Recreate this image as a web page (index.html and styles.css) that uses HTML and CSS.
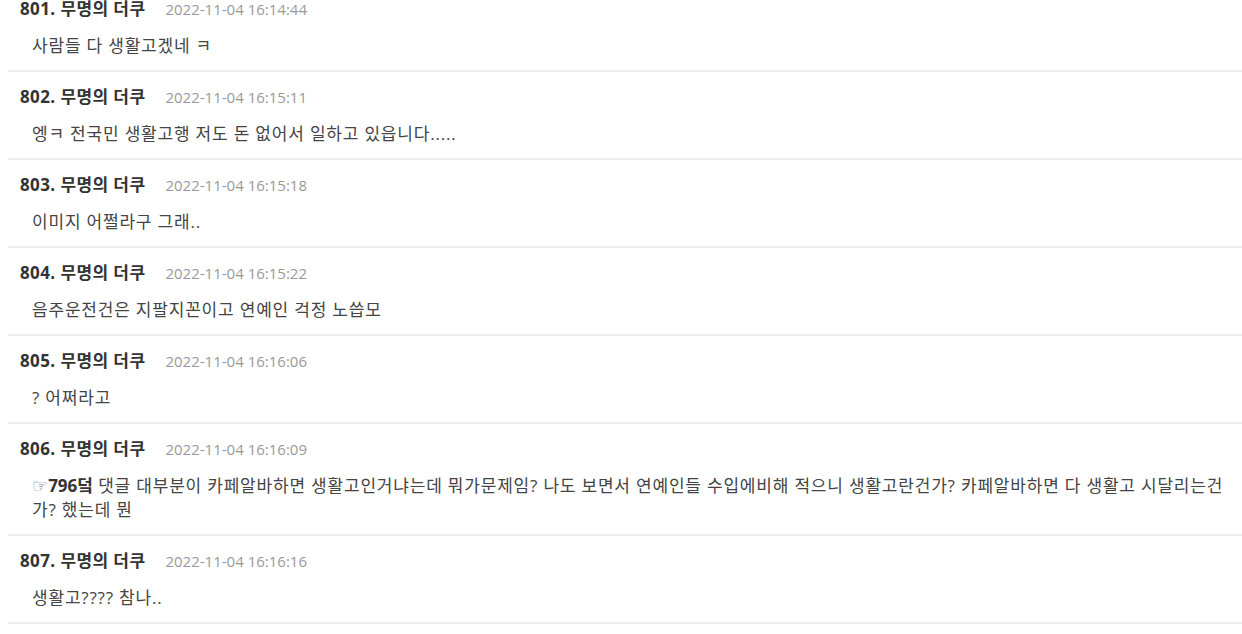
FILE: index.html
```html
<!DOCTYPE html>
<html lang="ko">
<head>
  <meta charset="UTF-8" />
  <meta name="viewport" content="width=device-width, initial-scale=1" />
  <title>댓글</title>
  <link rel="stylesheet" href="styles.css">
</head>
<body>
  <ul class="comments">
    <li class="comment">
      <div class="comment-head"><span class="num">801.</span> <span class="nick">무명의 더쿠</span><span class="date">2022-11-04 16:14:44</span></div>
      <div class="comment-body">사람들 다 생활고겠네 ㅋ</div>
    </li>
    <li class="comment">
      <div class="comment-head"><span class="num">802.</span> <span class="nick">무명의 더쿠</span><span class="date">2022-11-04 16:15:11</span></div>
      <div class="comment-body">엥ㅋ 전국민 생활고행 저도 돈 없어서 일하고 있읍니다.....</div>
    </li>
    <li class="comment">
      <div class="comment-head"><span class="num">803.</span> <span class="nick">무명의 더쿠</span><span class="date">2022-11-04 16:15:18</span></div>
      <div class="comment-body">이미지 어쩔라구 그래..</div>
    </li>
    <li class="comment">
      <div class="comment-head"><span class="num">804.</span> <span class="nick">무명의 더쿠</span><span class="date">2022-11-04 16:15:22</span></div>
      <div class="comment-body">음주운전건은 지팔지꼰이고 연예인 걱정 노씁모</div>
    </li>
    <li class="comment">
      <div class="comment-head"><span class="num">805.</span> <span class="nick">무명의 더쿠</span><span class="date">2022-11-04 16:16:06</span></div>
      <div class="comment-body">? 어쩌라고</div>
    </li>
    <li class="comment">
      <div class="comment-head"><span class="num">806.</span> <span class="nick">무명의 더쿠</span><span class="date">2022-11-04 16:16:09</span></div>
      <div class="comment-body"><a class="reply" href="#"><span class="hand">☞</span>796덬</a> 댓글 대부분이 카페알바하면 생활고인거냐는데 뭐가문제임? 나도 보면서 연예인들 수입에비해 적으니 생활고란건가? 카페알바하면 다 생활고 시달리는건가? 했는데 뭔</div>
    </li>
    <li class="comment">
      <div class="comment-head"><span class="num">807.</span> <span class="nick">무명의 더쿠</span><span class="date">2022-11-04 16:16:16</span></div>
      <div class="comment-body">생활고???? 참나..</div>
    </li>
  </ul>
</body>
</html>
```

FILE: styles.css
```css
html, body {
  margin: 0;
  padding: 0;
  background: #fff;
  overflow: hidden;
}
body {
  padding-left: 8px;
  font-family: 'Open Sans', 'Noto Sans CJK KR', sans-serif;
  color: #333;
}
.comments {
  list-style: none;
  margin: -16px 0 0 0;
  padding: 0;
}
.comment {
  padding: 13px 0 12px 12px;
  border-bottom: 2px solid #eee;
}
.comment-head {
  line-height: 24px;
  font-size: 17px;
  font-weight: bold;
  letter-spacing: 0.4px;
  color: #333;
}
.date {
  margin-left: 20px;
  font-size: 15px;
  font-weight: normal;
  letter-spacing: 0;
  color: #999;
}
.comment-body {
  margin-top: 13px;
  padding-left: 12px;
  padding-right: 2px;
  font-size: 17px;
  line-height: 24px;
  letter-spacing: 0.8px;
  color: #444;
}
.reply {
  color: #333;
  font-weight: bold;
  letter-spacing: 0;
  text-decoration: none;
}
.hand {
  font-family: 'DejaVu Sans', sans-serif;
  font-weight: normal;
  font-size: 18px;
  color: #7a7f8a;
}
```
